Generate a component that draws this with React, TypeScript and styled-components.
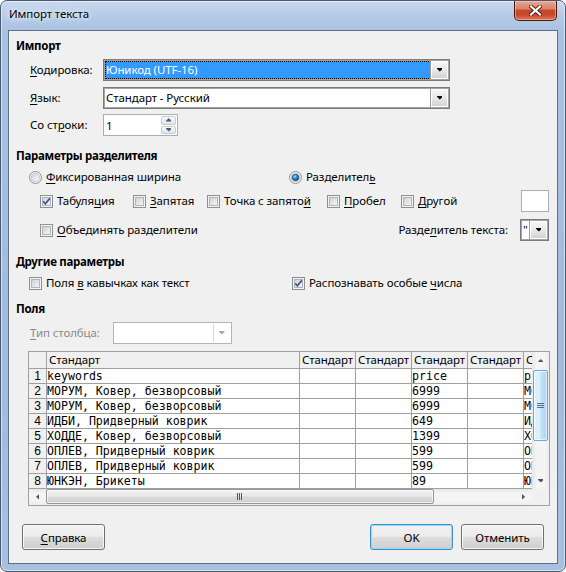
import React, { useId } from 'react';
import styled, { createGlobalStyle, css } from 'styled-components';

const UI_FONT = `"Noto Sans", "Open Sans", "DejaVu Sans", sans-serif`;
const MONO = `"DejaVu Sans Mono", "Liberation Mono", monospace`;

const GlobalStyle = createGlobalStyle`
  html, body { margin: 0; padding: 0; background: #ffffff; }
  body { font-family: ${UI_FONT}; font-size: 11.5px; letter-spacing: -0.1px; color: #000; }
  * { box-sizing: border-box; }
`;

const Win = styled.div`
  width: 566px;
  height: 572px;
  display: flex;
  flex-direction: column;
  border: 1px solid #4a5970;
  border-radius: 7px;
  background: linear-gradient(180deg, #c9daef 0px, #b5cbe7 14px, #a9c2e1 30px, #a1bbdd 60%, #a8c0e0 100%);
  box-shadow: inset 0 0 0 1px rgba(255, 255, 255, 0.55);
  overflow: hidden;
`;

const TitleBar = styled.div`
  height: 29px;
  flex: none;
  display: flex;
  align-items: flex-start;
  justify-content: space-between;
  padding: 0 8px 0 8px;
`;

const Title = styled.div`
  margin-top: 5px;
  line-height: 16px;
  color: #000;
  text-shadow: 0 0 5px #fff, 0 0 9px rgba(255, 255, 255, 0.9);
`;

const CloseBtn = styled.div`
  width: 43px;
  height: 20px;
  border: 1px solid #4a1a10;
  border-top: none;
  border-radius: 0 0 5px 5px;
  background: linear-gradient(180deg, #e9a899 0%, #dc7e66 42%, #c7472d 50%, #c8472c 72%, #e07a55 100%);
  box-shadow: inset 0 0 0 1px rgba(255, 210, 190, 0.5);
  display: flex;
  align-items: center;
  justify-content: center;
`;

const Client = styled.div`
  flex: 1;
  margin: 0 7px 7px 7px;
  background: #f0f0f0;
  border: 1px solid #5f6f86;
  display: flex;
  flex-direction: column;
`;

const Heading = styled.div<{ $mt: number }>`
  margin-top: ${(p) => p.$mt}px;
  padding-left: 7px;
  height: 16px;
  line-height: 16px;
  font-weight: 700;
  letter-spacing: -0.3px;
`;

const Row = styled.div<{ $mt: number; $pl: number; $pr?: number; $h?: number }>`
  margin-top: ${(p) => p.$mt}px;
  padding-left: ${(p) => p.$pl}px;
  padding-right: ${(p) => p.$pr ?? 0}px;
  height: ${(p) => p.$h ?? 22}px;
  display: flex;
  align-items: center;
`;

const FieldLabel = styled.span<{ $w?: number; $disabled?: boolean }>`
  ${(p) => (p.$w ? `width: ${p.$w}px; flex: none;` : '')}
  line-height: 16px;
  white-space: nowrap;
  color: ${(p) => (p.$disabled ? '#8a8a8a' : '#000')};
`;

const U = styled.span`
  text-decoration: underline;
  text-underline-offset: 2px;
`;

const Combo = styled.div<{ $w: number; $disabled?: boolean }>`
  width: ${(p) => p.$w}px;
  height: 22px;
  flex: none;
  display: flex;
  background: #fff;
  padding: 1px;
  border: 1px solid ${(p) => (p.$disabled ? '#b4b4b4' : '#7b7b7b')};
  box-shadow: ${(p) => (p.$disabled ? 'none' : 'inset 0 0 0 1px #a4a4a4')};
`;

const ComboValue = styled.div<{ $selected?: boolean }>`
  flex: 1;
  display: flex;
  align-items: center;
  padding-left: 1px;
  line-height: 16px;
  overflow: hidden;
  white-space: nowrap;
  ${(p) =>
    p.$selected &&
    css`
      background: #3399ff;
      color: #fff;
      outline: 1px dotted #000;
      outline-offset: -1px;
    `}
`;

const DropBtn = styled.div<{ $disabled?: boolean }>`
  width: 17px;
  flex: none;
  display: flex;
  align-items: center;
  justify-content: center;
  ${(p) =>
    p.$disabled
      ? css`
          background: #fff;
          border-left: 1px solid #d6d6d6;
        `
      : css`
          background: linear-gradient(180deg, #f6f6f6 0%, #e8e8e8 50%, #d4d4d4 100%);
          border: 1px solid #fdfdfd;
          box-shadow: -1px 0 0 #9a9a9a;
        `}
`;

const Spin = styled.div`
  width: 75px;
  height: 22px;
  flex: none;
  display: flex;
  background: #fff;
  border: 1px solid #abadb3;
  padding: 1px;
`;

const SpinText = styled.div`
  flex: 1;
  display: flex;
  align-items: center;
  padding-left: 1px;
`;

const SpinBtns = styled.div`
  width: 15px;
  display: flex;
  flex-direction: column;
  gap: 1px;
`;

const SpinBtn = styled.div`
  flex: 1;
  display: flex;
  align-items: center;
  justify-content: center;
  border: 1px solid #c6cbd3;
  border-radius: 2px;
  background: linear-gradient(180deg, #fbfbfb 0%, #eceef1 50%, #dfe3e8 100%);
`;

const TextBox = styled.div`
  width: 28px;
  height: 22px;
  flex: none;
  background: #fff;
  border: 1px solid #abadb3;
`;

const Option = styled.div<{ $w?: number }>`
  display: flex;
  align-items: center;
  gap: 4px;
  height: 16px;
  line-height: 16px;
  white-space: nowrap;
  ${(p) => (p.$w ? `width: ${p.$w}px; flex: none;` : 'flex: 1;')}
`;

const Gap = styled.div<{ $w: number }>`
  width: ${(p) => p.$w}px;
  flex: none;
`;

/* ---------- table ---------- */
const TableBox = styled.div`
  margin-top: 7px;
  margin-left: 19px;
  width: 522px;
  border: 1px solid #a0a0a0;
  background: #fff;
  display: flex;
  flex-direction: column;
`;

const TableMain = styled.div`
  display: flex;
  height: 137px;
`;

const GridClip = styled.div`
  width: 503px;
  overflow: hidden;
`;

const Grid = styled.div`
  width: 551px;
  display: grid;
  grid-template-columns: 18px 253px 56px 56px 56px 56px 56px;
  grid-template-rows: 17px repeat(8, 15px);
`;

type CellKind = 'corner' | 'head' | 'num' | 'data';

const Cell = styled.div<{ $kind: CellKind }>`
  border-right: 1px solid #a0a0a0;
  border-bottom: 1px solid #a0a0a0;
  overflow: hidden;
  white-space: nowrap;
  ${(p) =>
    p.$kind === 'corner' &&
    css`
      background: #f0f0f0;
    `}
  ${(p) =>
    p.$kind === 'head' &&
    css`
      background: #f0f0f0;
      line-height: 16px;
      padding-left: 2px;
    `}
  ${(p) =>
    p.$kind === 'num' &&
    css`
      background: #f0f0f0;
      font-family: 'Liberation Sans', Arial, sans-serif;
      font-size: 12px;
      letter-spacing: 0;
      line-height: 14px;
      text-align: center;
    `}
  ${(p) =>
    p.$kind === 'data' &&
    css`
      background: #fff;
      font-family: ${MONO};
      font-size: 11.6px;
      letter-spacing: 0;
      line-height: 14px;
    `}
`;

const VScroll = styled.div`
  width: 17px;
  flex: none;
  display: flex;
  flex-direction: column;
  background: linear-gradient(90deg, #e6e6e6 0%, #f4f4f4 25%, #f4f4f4 75%, #ececec 100%);
`;

const ArrowCell = styled.div<{ $w?: number; $h?: number }>`
  width: ${(p) => p.$w ?? 17}px;
  height: ${(p) => p.$h ?? 17}px;
  flex: none;
  display: flex;
  align-items: center;
  justify-content: center;
`;

const VTrack = styled.div`
  flex: 1;
  padding: 1px 1px 0 1px;
`;

const VThumb = styled.div`
  height: 71px;
  border: 1px solid #6aa8d8;
  border-radius: 2px;
  background: linear-gradient(90deg, #e3f4fc 0%, #d6eefb 45%, #bfe2f7 55%, #a9d6f3 100%);
  box-shadow: inset 0 0 0 1px rgba(255, 255, 255, 0.6);
  display: flex;
  align-items: center;
  justify-content: center;
`;

const HScroll = styled.div`
  height: 16px;
  display: flex;
  background: linear-gradient(180deg, #e6e6e6 0%, #f4f4f4 25%, #f4f4f4 75%, #ececec 100%);
`;

const HTrack = styled.div`
  flex: 1;
  display: flex;
`;

const HThumb = styled.div<{ $w: number }>`
  width: ${(p) => p.$w}px;
  height: 15px;
  border: 1px solid #979797;
  border-radius: 2px;
  background: linear-gradient(180deg, #f3f3f3 0%, #e8e8e8 45%, #d9d9d9 55%, #d0d0d0 100%);
  box-shadow: inset 0 0 0 1px rgba(255, 255, 255, 0.6);
  display: flex;
  align-items: center;
  justify-content: center;
`;

const Corner = styled.div`
  width: 17px;
  flex: none;
  background: #f0f0f0;
`;

/* ---------- buttons ---------- */
const BtnRow = styled.div`
  margin-top: 18px;
  display: flex;
  padding: 0 13px;
  gap: 8px;
`;

const Spacer = styled.div`
  flex: 1;
`;

const Btn = styled.div<{ $default?: boolean }>`
  width: 83px;
  height: 26px;
  display: flex;
  align-items: center;
  justify-content: center;
  color: #000;
  border: 1px solid ${(p) => (p.$default ? '#3c8fd0' : '#707070')};
  border-radius: 3px;
  background: linear-gradient(180deg, #f2f2f2 0%, #ebebeb 48%, #dddddd 52%, #cfcfcf 100%);
  box-shadow: inset 0 0 0 1px ${(p) => (p.$default ? '#8fdcfb' : 'rgba(255,255,255,0.8)')};
`;

/* ---------- drawings ---------- */
function CheckBox({ checked }: { checked?: boolean }) {
  const id = useId().replace(/:/g, '');
  return (
    <svg width="13" height="13" viewBox="0 0 13 13" style={{ flex: 'none' }}>
      <defs>
        <linearGradient id={`cb${id}`} x1="0" y1="0" x2="1" y2="1">
          <stop offset="0" stopColor="#cbcfd5" />
          <stop offset="1" stopColor="#f7f7f7" />
        </linearGradient>
      </defs>
      <rect x="0.5" y="0.5" width="12" height="12" fill="#f4f4f4" stroke="#8e8f8f" />
      <rect x="2.5" y="2.5" width="8" height="8" fill={`url(#cb${id})`} stroke="#b0b4ba" />
      {checked && (
        <path d="M3.2 6.4 L5.4 8.8 L9.8 3.4" fill="none" stroke="#3e5793" strokeWidth="1.7" />
      )}
    </svg>
  );
}

function Radio({ checked }: { checked?: boolean }) {
  const id = useId().replace(/:/g, '');
  return (
    <svg width="13" height="13" viewBox="0 0 13 13" style={{ flex: 'none' }}>
      <defs>
        <linearGradient id={`rg${id}`} x1="0" y1="0" x2="1" y2="1">
          <stop offset="0" stopColor="#cfd2d6" />
          <stop offset="1" stopColor="#fbfbfb" />
        </linearGradient>
        <radialGradient id={`rd${id}`} cx="0.4" cy="0.35" r="0.7">
          <stop offset="0" stopColor="#a6e2fb" />
          <stop offset="0.45" stopColor="#2a8ad0" />
          <stop offset="1" stopColor="#0c3f7a" />
        </radialGradient>
      </defs>
      <circle cx="6.5" cy="6.5" r="6" fill="#f4f4f4" stroke="#8e8f8f" />
      <circle cx="6.5" cy="6.5" r="4.2" fill={`url(#rg${id})`} stroke="#bcc0c5" strokeWidth="0.8" />
      {checked && <circle cx="6.5" cy="6.5" r="3.3" fill={`url(#rd${id})`} stroke="#174a80" strokeWidth="0.6" />}
    </svg>
  );
}

function Tri({ dir, color = '#000', big }: { dir: 'up' | 'down' | 'left' | 'right'; color?: string; big?: boolean }) {
  const s = big ? 1 : 0.8;
  const paths: Record<string, string> = {
    down: 'M0 0 H7 V1 L3.5 4.5 L0 1 Z',
    up: 'M0 4.5 H7 V3.5 L3.5 0 L0 3.5 Z',
    left: 'M4 0 V7 L0 3.5 Z',
    right: 'M0 0 V7 L4 3.5 Z',
  };
  const vertical = dir === 'up' || dir === 'down';
  const w = vertical ? 7 : 4;
  const h = vertical ? 4.5 : 7;
  return (
    <svg width={w * s} height={h * s} viewBox={`0 0 ${w} ${h}`}>
      <path d={paths[dir]} fill={color} />
    </svg>
  );
}

function CloseGlyph() {
  return (
    <svg width="13" height="11" viewBox="0 0 13 11">
      <path d="M2 1.5 L11 9.5 M11 1.5 L2 9.5" stroke="#5a1d12" strokeWidth="4" strokeLinecap="square" />
      <path d="M2 1.5 L11 9.5 M11 1.5 L2 9.5" stroke="#ffffff" strokeWidth="2.2" strokeLinecap="square" />
    </svg>
  );
}

function VGrip() {
  return (
    <svg width="7" height="6" viewBox="0 0 7 6">
      <path d="M0 0.5H7M0 2.5H7M0 4.5H7" stroke="#4d6d8c" strokeWidth="1" />
    </svg>
  );
}

function HGrip() {
  return (
    <svg width="6" height="7" viewBox="0 0 6 7">
      <path d="M0.5 0V7M2.5 0V7M4.5 0V7" stroke="#555" strokeWidth="1" />
    </svg>
  );
}

const rows: [string, string, string][] = [
  ['keywords', 'price', 'product'],
  ['МОРУМ, Ковер, безворсовый', '6999', 'МОРУМ'],
  ['МОРУМ, Ковер, безворсовый', '6999', 'МОРУМ'],
  ['ИДБИ, Придверный коврик', '649', 'ИДБИ'],
  ['ХОДДЕ, Ковер, безворсовый', '1399', 'ХОДДЕ'],
  ['ОПЛЕВ, Придверный коврик', '599', 'ОПЛЕВ'],
  ['ОПЛЕВ, Придверный коврик', '599', 'ОПЛЕВ'],
  ['ЮНКЭН, Брикеты', '89', 'ЮНКЭН'],
];

export default function App() {
  return (
    <>
      <GlobalStyle />
      <Win>
        <TitleBar>
          <Title>Импорт текста</Title>
          <CloseBtn>
            <CloseGlyph />
          </CloseBtn>
        </TitleBar>
        <Client>
          <Heading $mt={7}>Импорт</Heading>
          <Row $mt={5} $pl={21}>
            <FieldLabel $w={73}>
              <U>К</U>одировка:
            </FieldLabel>
            <Combo $w={347}>
              <ComboValue $selected>Юникод (UTF-16)</ComboValue>
              <DropBtn>
                <Tri dir="down" />
              </DropBtn>
            </Combo>
          </Row>
          <Row $mt={6} $pl={21}>
            <FieldLabel $w={73}>
              <U>Я</U>зык:
            </FieldLabel>
            <Combo $w={347}>
              <ComboValue>Стандарт - Русский</ComboValue>
              <DropBtn>
                <Tri dir="down" />
              </DropBtn>
            </Combo>
          </Row>
          <Row $mt={5} $pl={21}>
            <FieldLabel $w={73}>
              Со ст<U>р</U>оки:
            </FieldLabel>
            <Spin>
              <SpinText>1</SpinText>
              <SpinBtns>
                <SpinBtn>
                  <Tri dir="up" color="#4d6185" />
                </SpinBtn>
                <SpinBtn>
                  <Tri dir="down" color="#4d6185" />
                </SpinBtn>
              </SpinBtns>
            </Spin>
          </Row>

          <Heading $mt={12}>Параметры разделителя</Heading>
          <Row $mt={5} $pl={20} $h={16}>
            <Option $w={260}>
              <Radio />
              <span>
                <U>Ф</U>иксированная ширина
              </span>
            </Option>
            <Option>
              <Radio checked />
              <span>
                Разделител<U>ь</U>
              </span>
            </Option>
          </Row>
          <Row $mt={5} $pl={31} $pr={8}>
            <Option $w={93}>
              <CheckBox checked />
              <span>
                Табуля<U>ц</U>ия
              </span>
            </Option>
            <Option $w={74}>
              <CheckBox />
              <span>
                <U>З</U>апятая
              </span>
            </Option>
            <Option $w={120}>
              <CheckBox />
              <span>
                Точка с запято<U>й</U>
              </span>
            </Option>
            <Option $w={74}>
              <CheckBox />
              <span>
                <U>П</U>робел
              </span>
            </Option>
            <Option>
              <CheckBox />
              <span>
                <U>Д</U>ругой
              </span>
            </Option>
            <TextBox />
          </Row>
          <Row $mt={7} $pl={31} $pr={8}>
            <Option>
              <CheckBox />
              <span>
                <U>О</U>бъединять разделители
              </span>
            </Option>
            <FieldLabel>
              Разде<U>л</U>итель текста:
            </FieldLabel>
            <Gap $w={12} />
            <Combo $w={29}>
              <ComboValue>"</ComboValue>
              <DropBtn>
                <Tri dir="down" />
              </DropBtn>
            </Combo>
          </Row>

          <Heading $mt={13}>Другие параметры</Heading>
          <Row $mt={5} $pl={20} $h={16}>
            <Option $w={263}>
              <CheckBox />
              <span>
                Поля <U>в</U> кавычках как текст
              </span>
            </Option>
            <Option>
              <CheckBox checked />
              <span>
                Распознавать особые <U>ч</U>исла
              </span>
            </Option>
          </Row>

          <Heading $mt={10}>Поля</Heading>
          <Row $mt={5} $pl={21}>
            <FieldLabel $w={83} $disabled>
              <U>Т</U>ип столбца:
            </FieldLabel>
            <Combo $w={119} $disabled>
              <ComboValue />
              <DropBtn $disabled>
                <Tri dir="down" color="#a8a8a8" />
              </DropBtn>
            </Combo>
          </Row>

          <TableBox>
            <TableMain>
              <GridClip>
                <Grid>
                  <Cell $kind="corner" />
                  {Array.from({ length: 6 }).map((_, i) => (
                    <Cell key={`h${i}`} $kind="head">
                      Стандарт
                    </Cell>
                  ))}
                  {rows.map((r, i) => (
                    <React.Fragment key={i}>
                      <Cell $kind="num">{i + 1}</Cell>
                      <Cell $kind="data">{r[0]}</Cell>
                      <Cell $kind="data" />
                      <Cell $kind="data" />
                      <Cell $kind="data">{r[1]}</Cell>
                      <Cell $kind="data" />
                      <Cell $kind="data">{r[2]}</Cell>
                    </React.Fragment>
                  ))}
                </Grid>
              </GridClip>
              <VScroll>
                <ArrowCell>
                  <Tri dir="up" color="#555" />
                </ArrowCell>
                <VTrack>
                  <VThumb>
                    <VGrip />
                  </VThumb>
                </VTrack>
                <ArrowCell>
                  <Tri dir="down" color="#555" />
                </ArrowCell>
              </VScroll>
            </TableMain>
            <HScroll>
              <ArrowCell $h={16}>
                <Tri dir="left" color="#555" />
              </ArrowCell>
              <HTrack>
                <HThumb $w={388}>
                  <HGrip />
                </HThumb>
              </HTrack>
              <ArrowCell $h={16}>
                <Tri dir="right" color="#555" />
              </ArrowCell>
              <Corner />
            </HScroll>
          </TableBox>

          <BtnRow>
            <Btn>
              <span>
                <U>С</U>правка
              </span>
            </Btn>
            <Spacer />
            <Btn $default>OK</Btn>
            <Btn>Отменить</Btn>
          </BtnRow>
        </Client>
      </Win>
    </>
  );
}
